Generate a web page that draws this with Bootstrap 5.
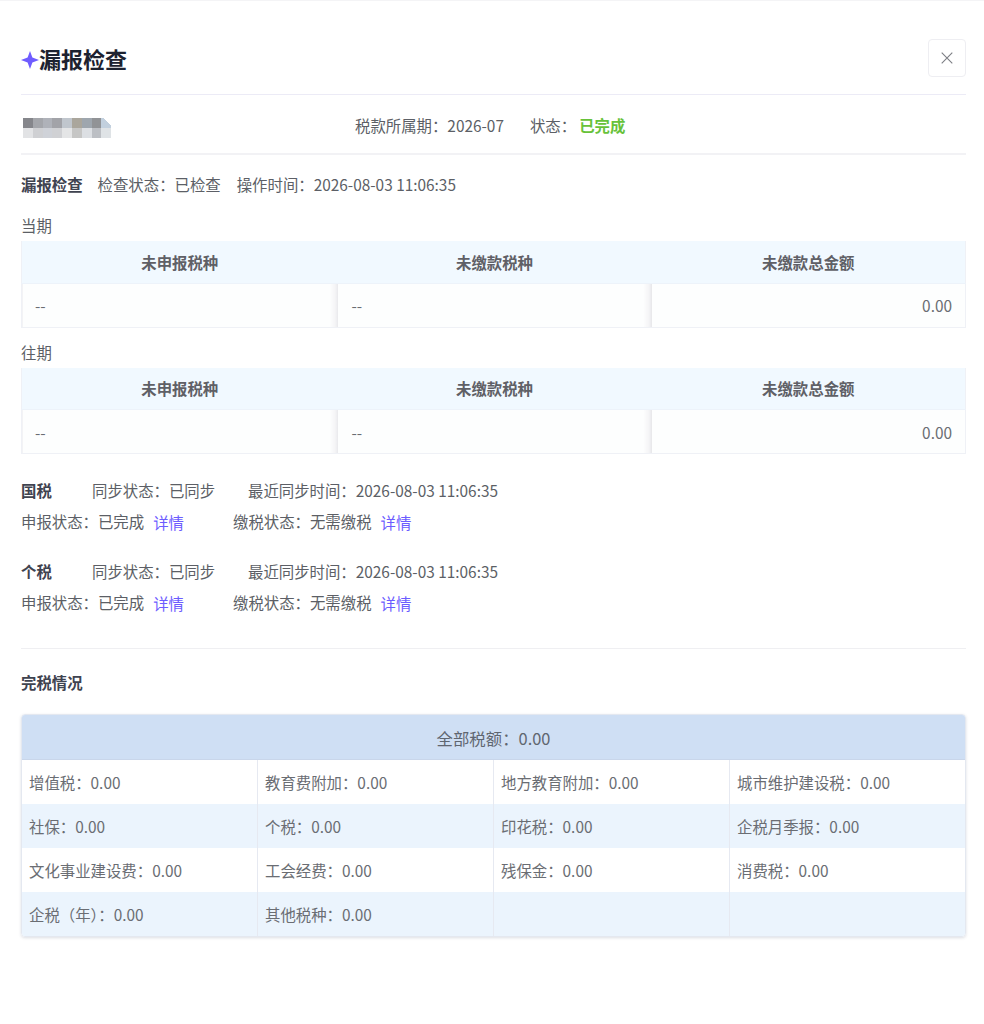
<!DOCTYPE html>
<html lang="zh-CN">
<head>
<meta charset="utf-8">
<title>漏报检查</title>
<link href="https://cdn.jsdelivr.net/npm/bootstrap@5.3.0/dist/css/bootstrap.min.css" rel="stylesheet">
<style>
body{font-family:"Noto Sans CJK SC","Noto Sans",sans-serif;font-size:15.4px;color:#5c5f66;background:#fff;line-height:22px}
.sheet{padding:0 18px 0 21px;height:1024px;border-top:1px solid #f4f4f6}
.head-bar{height:94px;padding-top:38px;border-bottom:1px solid #ecebf6;align-items:flex-start}
.head-title{font-size:22px;font-weight:700;color:#1d2230;line-height:38px;margin:0}
.head-star{margin-top:3px}
.x-btn{width:38px;height:38px;border:1px solid #eeeef2;border-radius:4px;background:#fff;padding:0}
.meta-bar{height:60px;padding-top:2px;border-bottom:2px solid #f2f2f5}
.mosaic{width:90px;display:grid;grid-template-columns:repeat(9,9.8px);grid-auto-rows:10px;margin:6px 0 0 2px}
.mosaic span{display:block}
.mosaic .corner{background:linear-gradient(to top right,#c2d0de 62%,#fff 62%)}
.meta-mid{margin-left:242px}
.state-lab{margin-left:26px}
.ok-text{color:#67c23a;font-weight:700;margin-left:3px}
.strong-lab{font-weight:700;color:#3f4350}
.gap-15{margin-right:15px}
.check-line{margin-top:18px}
.period{margin-top:19px;margin-bottom:5px;line-height:22px}
.period-2{margin-top:13px}
.tbl{table-layout:fixed;margin:0;border:1px solid #eff1f6;border-top:0;--bs-table-color:#5c5f66}
.tbl th{background:#f1f9ff;height:42px;padding:0;text-align:center;vertical-align:middle;font-weight:700;color:#5f6066;border:0;border-bottom:1px solid #edf3fa}
.tbl th:first-child{width:316px}
.tbl td{height:44px;padding:0 13px 0 13px;vertical-align:middle;color:#6a6d73;background:#fdfefe;border:0;border-bottom:1px solid #eff1f6}
.tbl td.shade{background:linear-gradient(to left,#e6e6e9 0,#f4f4f6 3px,#fdfefe 9px)}
.tbl td.col-two{padding-left:14px}
.tax-block{margin-top:25px}
.tax-block.b2{margin-top:28px}
.tax-name{width:71px;font-weight:700;color:#3f4350}
.tax-l1{line-height:22px}
.tax-l2{margin-top:9px;line-height:22px}
.s-w{width:156px}
.d-link{color:#6c5cff;text-decoration:none;margin-left:9px;position:relative;top:1px}
.cell-a{width:212px}
.sep{border-top:1px solid #efeff2;margin:35px 0 0}
.sec-title{font-weight:700;color:#3f4350;margin-top:22px}
.sum-card{margin-top:21px;border:1px solid #e4e8f0;border-radius:4px;overflow:hidden;box-shadow:0 1px 3px rgba(60,70,100,.18)}
.sum-head{height:45px;background:#cfdff4;text-align:center;line-height:47px;font-size:16.4px;color:#5f6670;border-bottom:1px solid #c9d6ea}
.sum-grid{display:grid;grid-template-columns:236px 236px 236px 1fr}
.sum-grid div{height:44px;line-height:45px;padding-left:7px;border-right:1px solid #e6e9f1;color:#6a6d73}
.sum-grid div:nth-child(4n){border-right:0}
.sum-grid .alt{background:#ebf4fd}
</style>
</head>
<body>
<div class="sheet">
  <div class="head-bar d-flex justify-content-between">
    <h1 class="head-title d-flex align-items-center">
      <svg class="head-star" width="18" height="18" viewBox="0 0 18 18" aria-hidden="true"><path d="M9 0 11.4 6.6 18 9 11.4 11.4 9 18 6.6 11.4 0 9 6.6 6.6Z" fill="#6f5cff"/></svg>漏报检查
    </h1>
    <button class="x-btn btn d-flex align-items-center justify-content-center" type="button" aria-label="关闭">
      <svg width="12" height="12" viewBox="0 0 12 12"><path d="M.7.7l10.6 10.6M11.3.7.7 11.3" stroke="#7c7e84" stroke-width="1.1" fill="none"/></svg>
    </button>
  </div>

  <div class="meta-bar d-flex align-items-center">
    <div class="mosaic" aria-hidden="true">
      <span style="background:#85868b"></span><span style="background:#a4a6ab"></span><span style="background:#afb2b9"></span><span style="background:#a2a3a8"></span><span style="background:#c0c6cd"></span><span style="background:#aaa69c"></span><span style="background:#9ea6ae"></span><span style="background:#919396"></span><span class="corner"></span>
      <span style="background:#e2e3e5"></span><span style="background:#cfd0d3"></span><span style="background:#cfd2d8"></span><span style="background:#d0d1d4"></span><span style="background:#e4e5e6"></span><span style="background:#c6c6c5"></span><span style="background:#dcdfe3"></span><span style="background:#bcbfc4"></span><span style="background:#dfe3e6"></span>
    </div>
    <div class="meta-mid">税款所属期：2026-07</div>
    <div class="state-lab">状态：</div>
    <div class="ok-text">已完成</div>
  </div>

  <div class="check-line d-flex">
    <span class="strong-lab gap-15">漏报检查</span>
    <span class="me-3">检查状态：已检查</span>
    <span>操作时间：2026-08-03 11:06:35</span>
  </div>

  <div class="period">当期</div>
  <table class="tbl table">
    <thead><tr><th>未申报税种</th><th>未缴款税种</th><th>未缴款总金额</th></tr></thead>
    <tbody><tr><td class="shade">--</td><td class="shade col-two">--</td><td class="text-end">0.00</td></tr></tbody>
  </table>

  <div class="period period-2">往期</div>
  <table class="tbl table">
    <thead><tr><th>未申报税种</th><th>未缴款税种</th><th>未缴款总金额</th></tr></thead>
    <tbody><tr><td class="shade">--</td><td class="shade col-two">--</td><td class="text-end">0.00</td></tr></tbody>
  </table>

  <div class="tax-block">
    <div class="tax-l1 d-flex"><span class="tax-name">国税</span><span class="s-w">同步状态：已同步</span><span>最近同步时间：2026-08-03 11:06:35</span></div>
    <div class="tax-l2 d-flex"><span class="cell-a">申报状态：已完成<a class="d-link" href="#">详情</a></span><span>缴税状态：无需缴税<a class="d-link" href="#">详情</a></span></div>
  </div>
  <div class="tax-block b2">
    <div class="tax-l1 d-flex"><span class="tax-name">个税</span><span class="s-w">同步状态：已同步</span><span>最近同步时间：2026-08-03 11:06:35</span></div>
    <div class="tax-l2 d-flex"><span class="cell-a">申报状态：已完成<a class="d-link" href="#">详情</a></span><span>缴税状态：无需缴税<a class="d-link" href="#">详情</a></span></div>
  </div>

  <div class="sep"></div>
  <div class="sec-title">完税情况</div>

  <div class="sum-card">
    <div class="sum-head">全部税额：0.00</div>
    <div class="sum-grid">
      <div>增值税：0.00</div><div>教育费附加：0.00</div><div>地方教育附加：0.00</div><div>城市维护建设税：0.00</div>
      <div class="alt">社保：0.00</div><div class="alt">个税：0.00</div><div class="alt">印花税：0.00</div><div class="alt">企税月季报：0.00</div>
      <div>文化事业建设费：0.00</div><div>工会经费：0.00</div><div>残保金：0.00</div><div>消费税：0.00</div>
      <div class="alt">企税（年）：0.00</div><div class="alt">其他税种：0.00</div><div class="alt"></div><div class="alt"></div>
    </div>
  </div>
</div>
<script src="https://cdn.jsdelivr.net/npm/bootstrap@5.3.0/dist/js/bootstrap.bundle.min.js"></script>
</body>
</html>
